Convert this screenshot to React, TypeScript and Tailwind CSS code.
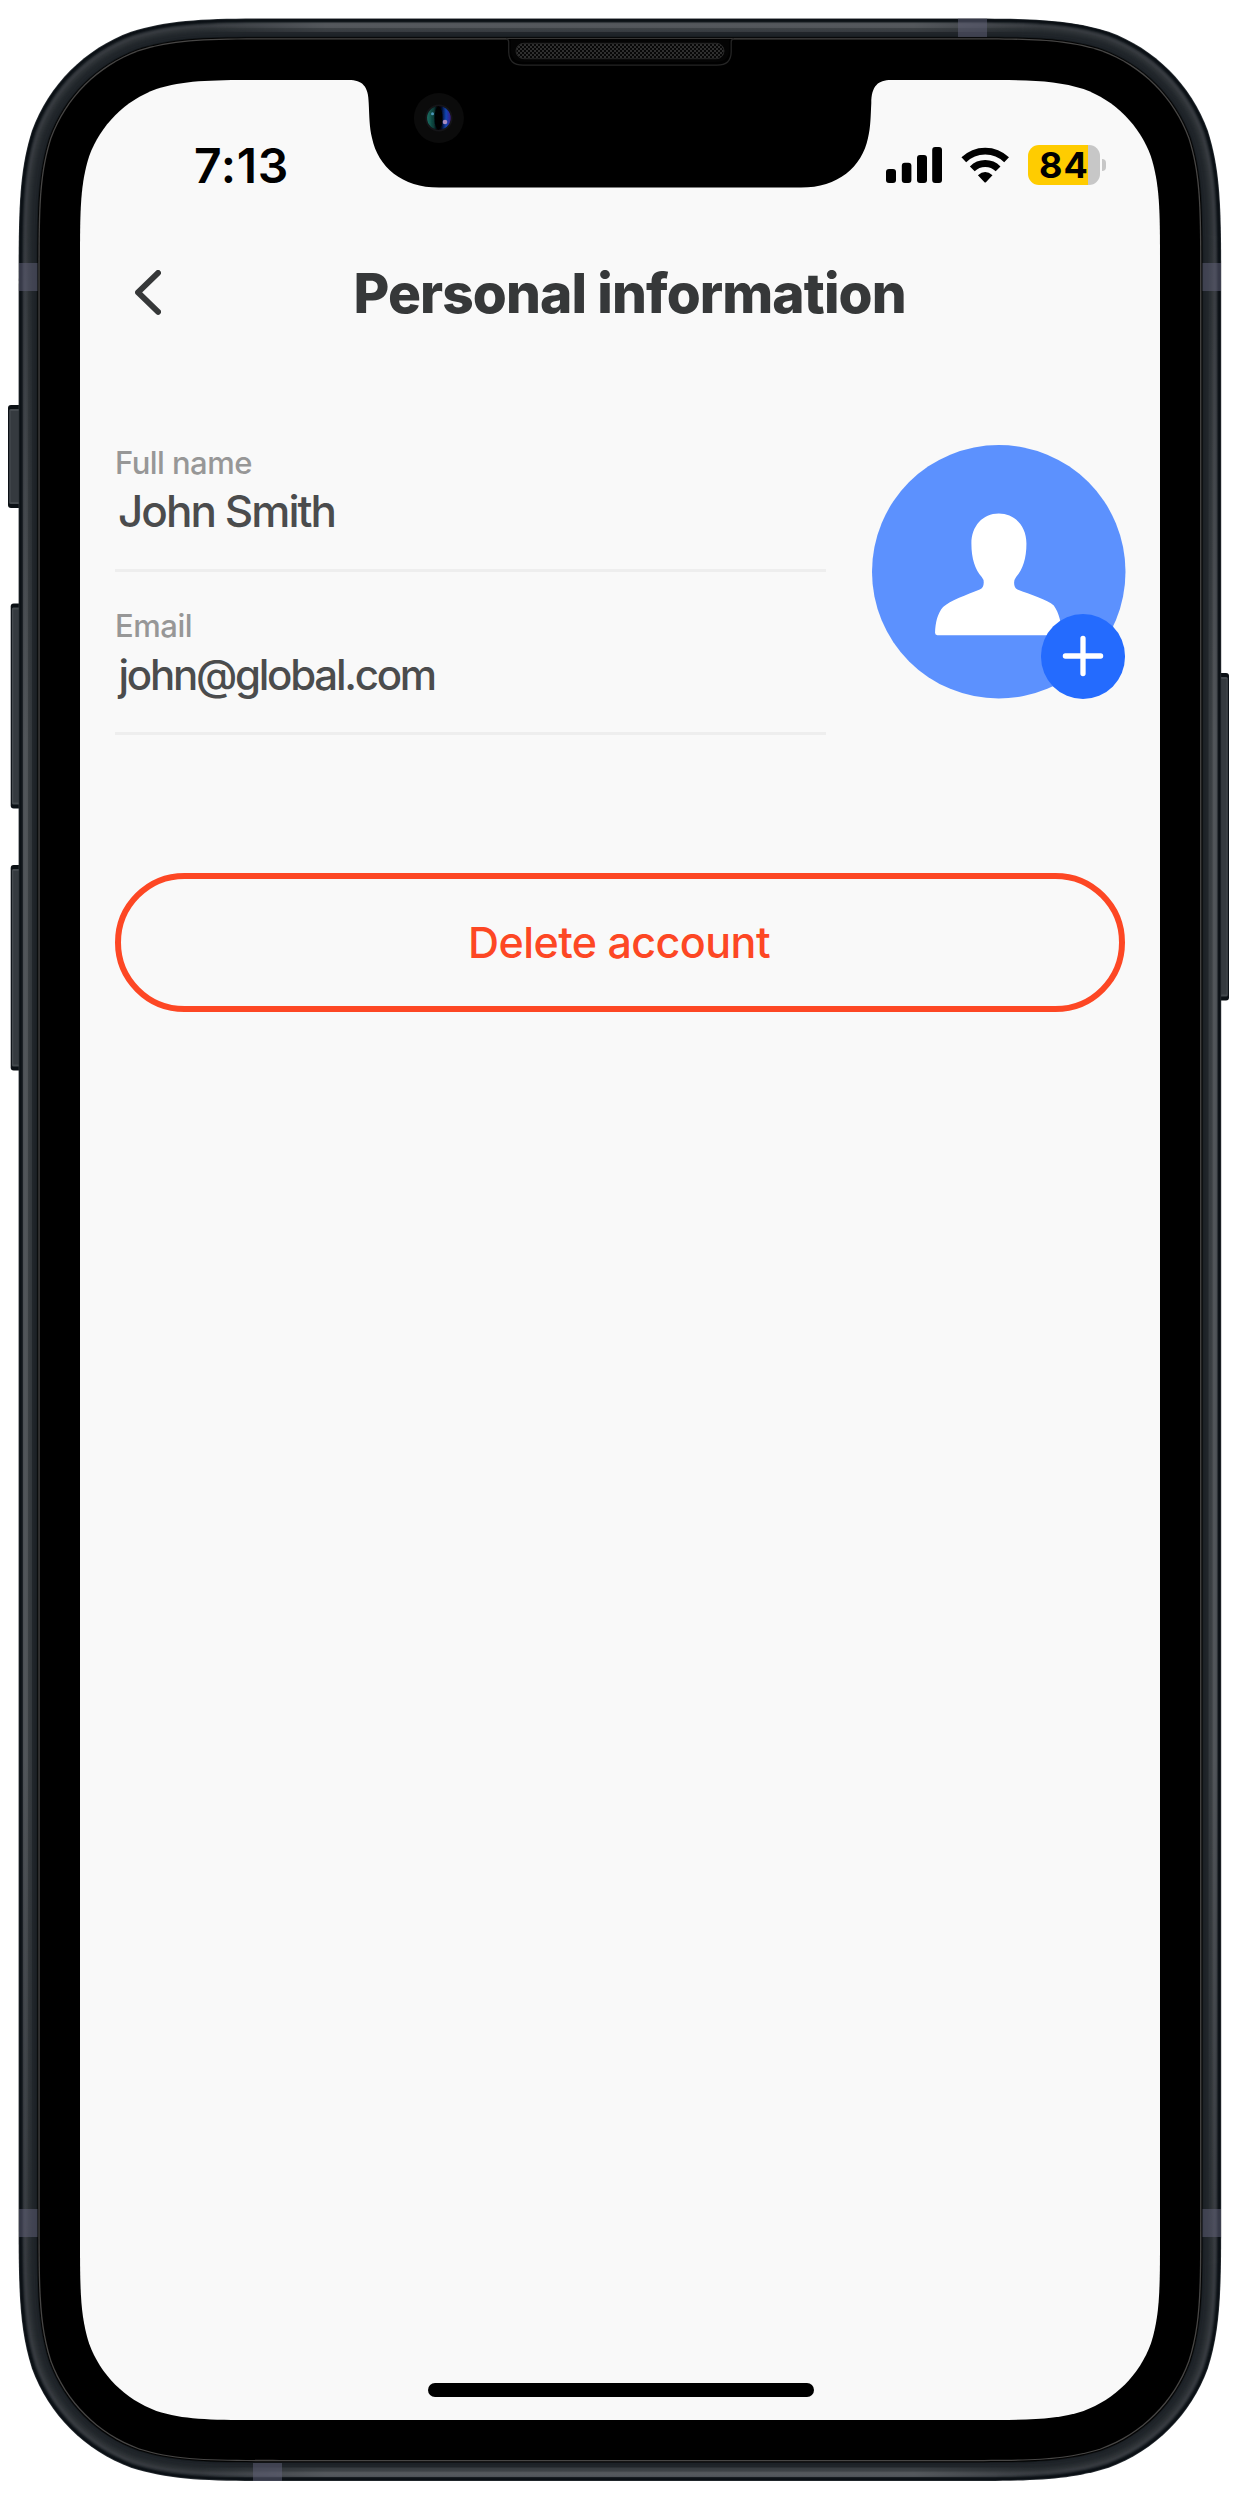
/** Continuous-corner rounded rectangle. */
function squircle(x: number, y: number, w: number, h: number, r: number) {
  const a = 1.52866 * r;
  const b = 1.08849 * r;
  const c = 0.86841 * r;
  const d = 0.63149 * r;
  const e = 0.07491 * r;
  const f = 0.37282 * r;
  const g = 0.16906 * r;
  const R = x + w;
  const B = y + h;
  return [
    `M${x + a} ${y}H${R - a}`,
    `C${R - b} ${y} ${R - c} ${y} ${R - d} ${y + e}`,
    `C${R - f} ${y + g} ${R - g} ${y + f} ${R - e} ${y + d}`,
    `C${R} ${y + c} ${R} ${y + b} ${R} ${y + a}V${B - a}`,
    `C${R} ${B - b} ${R} ${B - c} ${R - e} ${B - d}`,
    `C${R - g} ${B - f} ${R - f} ${B - g} ${R - d} ${B - e}`,
    `C${R - c} ${B} ${R - b} ${B} ${R - a} ${B}H${x + a}`,
    `C${x + b} ${B} ${x + c} ${B} ${x + d} ${B - e}`,
    `C${x + f} ${B - g} ${x + g} ${B - f} ${x + e} ${B - d}`,
    `C${x} ${B - c} ${x} ${B - b} ${x} ${B - a}V${y + a}`,
    `C${x} ${y + b} ${x} ${y + c} ${x + e} ${y + d}`,
    `C${x + g} ${y + f} ${x + f} ${y + g} ${x + d} ${y + e}`,
    `C${x + c} ${y} ${x + b} ${y} ${x + a} ${y}Z`,
  ].join("");
}

const body = (inset: number) =>
  squircle(18.6 + inset, 18.4 + inset, 1202.6 - inset * 2, 2462.6 - inset * 2, 178 - inset);

const metal: [number, string][] = [
  [0, "#2a2f34"], [0.7, "#0b1015"], [2, "#0d1217"], [3, "#171c21"], [4, "#272c31"],
  [5, "#32363b"], [6, "#373b40"], [7, "#35393e"], [8, "#313539"], [9, "#2d3236"],
  [10, "#2a2f33"], [11, "#272c30"], [12, "#24292e"], [13, "#22272b"], [14, "#20252a"],
  [16, "#1d2227"], [18, "#14191d"], [18.8, "#040404"], [19.8, "#474645"], [21.1, "#000000"],
];

const antennas = [
  [19, 263, 18.5, 28], [1202.5, 263, 18.5, 28], [19, 2209, 18.5, 28],
  [1202.5, 2209, 18.5, 28], [958, 18.5, 29, 18.5], [253, 2463, 29, 18],
];

function SideButton({ x, y, w, h }: { x: number; y: number; w: number; h: number }) {
  return (
    <g>
      <rect x={x} y={y} width={w} height={h} rx="3" fill="#0b1015" />
      <rect x={x + 1.2} y={y + 4} width={w - 2.4} height={h - 8} rx="1.5" fill="#454a4f" />
      <rect x={x + 2.6} y={y + 6} width={w - 5} height={h - 12} fill="#353a3f" />
    </g>
  );
}

function Device() {
  return (
    <svg className="absolute inset-0" width="1245" height="2500" viewBox="0 0 1245 2500" aria-hidden="true">
      <defs>
        <linearGradient id="vertical" x1="0" y1="0" x2="0" y2="1">
          <stop offset="0" stopColor="#6d7175" stopOpacity="0" />
          <stop offset="0.25" stopColor="#6d7175" stopOpacity="0.5" />
          <stop offset="0.75" stopColor="#6d7175" stopOpacity="0.5" />
          <stop offset="1" stopColor="#6d7175" stopOpacity="0" />
        </linearGradient>
        <linearGradient id="horizontal">
          <stop offset="0" stopColor="#6d7175" stopOpacity="0" />
          <stop offset="0.15" stopColor="#6d7175" stopOpacity="0.55" />
          <stop offset="0.85" stopColor="#6d7175" stopOpacity="0.55" />
          <stop offset="1" stopColor="#6d7175" stopOpacity="0" />
        </linearGradient>
        <linearGradient id="lens">
          <stop offset="0" stopColor="#1d6f62" />
          <stop offset="0.28" stopColor="#0a3a36" />
          <stop offset="0.42" stopColor="#000206" />
          <stop offset="0.6" stopColor="#02071c" />
          <stop offset="0.8" stopColor="#0f45b4" />
          <stop offset="1" stopColor="#3a1d8c" />
        </linearGradient>
        <filter id="soft" x="-20%" y="-20%" width="140%" height="140%">
          <feGaussianBlur stdDeviation="0.6" />
        </filter>
        <pattern id="mesh" width="4" height="4" patternUnits="userSpaceOnUse">
          <rect width="4" height="4" fill="#070707" />
          <rect width="2" height="2" fill="#2f2f2f" />
          <rect x="2" y="2" width="2" height="2" fill="#2f2f2f" />
        </pattern>
      </defs>

      <SideButton x={8} y={405} w={14} h={103} />
      <SideButton x={10.7} y={603.5} w={11} h={205} />
      <SideButton x={10.7} y={865} w={11} h={205.5} />
      <SideButton x={1217} y={673} w={12} h={327.5} />

      {metal.map(([inset, color]) => (
        <path key={inset} d={body(inset)} fill={color} />
      ))}
      <rect x="23" y="230" width="5" height="2040" fill="url(#vertical)" />
      <rect x="28" y="230" width="4" height="2040" fill="url(#vertical)" opacity="0.45" />
      <rect x="1212.5" y="230" width="5" height="2040" fill="url(#vertical)" />
      <rect x="1208.5" y="230" width="4" height="2040" fill="url(#vertical)" opacity="0.45" />
      <rect x="200" y="22.5" width="840" height="5.5" fill="url(#horizontal)" />
      <rect x="200" y="28" width="840" height="4" fill="url(#horizontal)" opacity="0.5" />
      <rect x="200" y="2471.5" width="840" height="5.5" fill="url(#horizontal)" />
      <rect x="200" y="2467.5" width="840" height="4" fill="url(#horizontal)" opacity="0.5" />
      {antennas.map(([x, y, w, h]) => (
        <rect key={`${x}-${y}`} x={x} y={y} width={w} height={h} fill="#62627a" opacity="0.5" />
      ))}

      <path d={squircle(80, 80, 1080, 2340, 121)} fill="#f9f9f9" />
      <path
        d="M349 79V80C362 80 368.6 86 368.7 103C369.4 116 369.3 127 372 138C378 167 402 187.6 439 187.6H801C838 187.6 862 167 868 138C870.7 127 870.6 116 871.3 103C871.4 86 878 80 891 80V79Z"
        fill="#000"
      />
      <path
        d="M506 39Q508.7 39 508.7 42V52Q509 65.2 523 65.2H717Q731 65.2 731.2 52V42Q731.2 39 734 39"
        fill="#000"
        stroke="#242424"
        strokeWidth="1.3"
      />
      <path d="M511 39.5V51Q512 62 524 62H716Q728 62 729 51V39.5Z" fill="#040404" />
      <rect x="516" y="43.3" width="208" height="15.4" rx="7.7" fill="url(#mesh)" stroke="#262626" />

      <circle cx="438.9" cy="118" r="25" fill="#0b0b0b" />
      <circle cx="438.9" cy="118" r="13.6" fill="#151518" />
      <g filter="url(#soft)">
        <circle cx="438.9" cy="118" r="11.8" fill="url(#lens)" />
        <ellipse cx="438.5" cy="118" rx="4" ry="11.8" fill="#000206" />
        <circle cx="432.5" cy="113.7" r="1.5" fill="#4b97b8" />
        <circle cx="445" cy="122" r="2.3" fill="#a58bc0" />
      </g>
    </svg>
  );
}

function Signal() {
  return (
    <svg width="56" height="36" viewBox="886 147 56 36" fill="#000" aria-hidden="true">
      <rect x="886" y="169" width="10" height="14" rx="3" />
      <rect x="901.8" y="162.7" width="9.6" height="20.3" rx="3" />
      <rect x="917" y="155" width="10" height="28" rx="3" />
      <rect x="932.2" y="147" width="9.8" height="36" rx="3" />
    </svg>
  );
}

function Wifi() {
  return (
    <svg width="49" height="36" viewBox="960.5 147 49 36" fill="none" stroke="#000" aria-hidden="true">
      <path d="M963.3 159.8A30.6 30.6 0 0 1 1006.1 159.8" strokeWidth="6.8" />
      <path d="M971.8 168.8A18.3 18.3 0 0 1 997.6 168.8" strokeWidth="6.8" />
      <path d="M977.4 175.2Q984.7 168.6 992 175.2L985.4 182.2Q984.7 183 984 182.2Z" fill="#000" stroke="none" />
    </svg>
  );
}

function Battery() {
  return (
    <div className="flex items-center gap-[2px]">
      <div className="flex h-[40px] w-[72px] items-center rounded-[11px] bg-[linear-gradient(90deg,#ffcc00_60px,#c7c7c7_60px)] pl-[11px] text-[36px] leading-[40px] font-bold tracking-[1px] text-black">
        84
      </div>
      <div className="h-[12px] w-[4px] rounded-r-full bg-[#c7c7c7]" />
    </div>
  );
}

function StatusBar() {
  return (
    <div className="flex h-[170px] items-center justify-between pr-[54px] pl-[114px]">
      <span className="pt-[2px] text-[48px] leading-[48px] font-semibold tracking-[0.7px] text-black">7:13</span>
      <div className="flex items-center">
        <Signal />
        <div className="ml-[19px]">
          <Wifi />
        </div>
        <div className="ml-[18px]">
          <Battery />
        </div>
      </div>
    </div>
  );
}

function Header() {
  return (
    <header className="flex h-[85px] items-center pl-[55px]">
      <button aria-label="Back" className="block">
        <svg width="26" height="46" viewBox="135 270 26 46" fill="none" stroke="#363839" strokeWidth="5.8" strokeLinecap="round" strokeLinejoin="round">
          <path d="M158.1 272.9L138 292.4L158.1 311.9" />
        </svg>
      </button>
      <h1 className="ml-[192.5px] text-[55px] leading-[60px] font-extrabold tracking-[-0.9px] whitespace-nowrap text-[#363839]">
        Personal information
      </h1>
    </header>
  );
}

function Avatar() {
  return (
    <div className="relative size-[253.5px] shrink-0">
      <svg className="size-full overflow-visible" viewBox="96 75 760 760" aria-hidden="true">
        <circle cx="476" cy="455" r="380" fill="#5c91fe" />
        <path
          d="M476 280C428 280 394 318 394 370C394 415 405 447 425 471Q431 478 431 487Q431 503 419 508C380 524 330 541 309 561C292 581 286 608 285 638Q285 645 292 645H658Q666 645 665 638C664 610 657 578 641 556C622 538 571 523 532 508Q522 503 522 488Q522 479 528 471C548 447 559 415 559 370C559 318 524 280 476 280Z"
          fill="#fff"
        />
      </svg>
      <button
        aria-label="Change photo"
        className="absolute right-0 bottom-0 flex size-[84.5px] items-center justify-center rounded-full bg-[#246bfe]"
      >
        <svg width="42" height="42" viewBox="0 0 42 42" stroke="#fff" strokeWidth="5.3" strokeLinecap="round">
          <path d="M21 3.4V38.6M3.4 21H38.6" />
        </svg>
      </button>
    </div>
  );
}

export default function App() {
  return (
    <main className="relative h-[2500px] w-[1245px] overflow-hidden bg-white pt-[80px] pl-[80px] font-['Inter',sans-serif]">
      <Device />
      <div className="relative flex h-[2340px] w-[1080px] flex-col">
        <StatusBar />
        <Header />
        <section className="flex items-start justify-between px-[35px] pt-[110px]">
          <div className="w-[711px]">
            <div className="border-b-[3px] border-[#eeeeee] pb-[34px]">
              <p className="text-[31px] leading-[36px] font-[450] tracking-[-0.55px] text-[#979797]">Full name</p>
              <p className="mt-[6px] pl-[3px] text-[44px] leading-[48px] font-[450] tracking-[-1.95px] text-[#4b4c4d]">
                John Smith
              </p>
            </div>
            <div className="border-b-[3px] border-[#eeeeee] pt-[36px] pb-[33px]">
              <p className="text-[31px] leading-[36px] font-[450] tracking-[-0.45px] text-[#979797]">Email</p>
              <p className="mt-[7px] pl-[3.5px] text-[42px] leading-[48px] font-[450] tracking-[-2.25px] text-[#4b4c4d]">
                john@global.com
              </p>
            </div>
          </div>
          <Avatar />
        </section>
        <div className="px-[35px] pt-[138px]">
          <button className="flex h-[139px] w-full items-center justify-center rounded-full border-[6px] border-[#fd4724] pr-[2px] pb-[2px] text-[43px] leading-[48px] font-medium tracking-[-0.55px] text-[#fd4724]">
            Delete account
          </button>
        </div>
        <div className="mt-auto mb-[23px] ml-[347.5px] h-[14.5px] w-[386px] rounded-full bg-black" />
      </div>
    </main>
  );
}
